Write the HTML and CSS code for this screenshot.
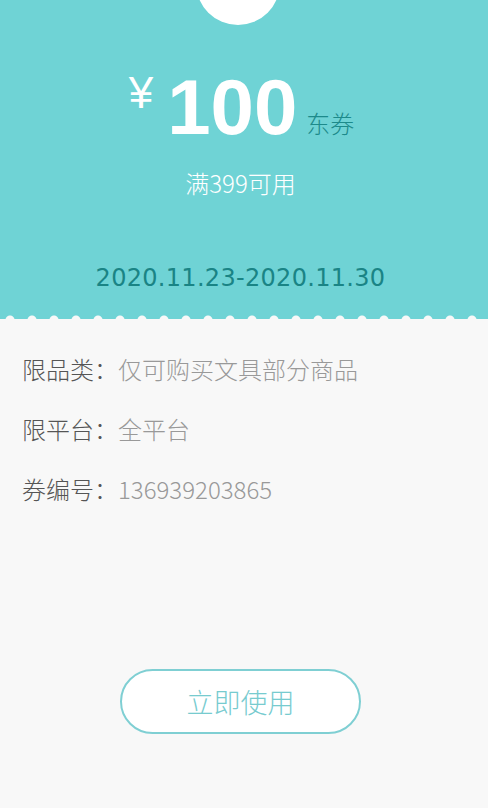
FILE: index.html
```html
<!DOCTYPE html>
<html>
<head>
	<meta charset="UTF-8">
	<title>优惠券详情</title>
	<meta name="viewport" content="width=488, initial-scale=1">
	<link rel="stylesheet" href="styles.css">
</head>
<body>
	<div class="coupon">
	<div class="coupon-top">
		<div class="amount">
		<span class="yen">¥</span>
		<span class="value">100</span>
		<span class="unit">东券</span>
		</div>
		<div class="limit">满399可用</div>
		<div class="date">2020.11.23-2020.11.30</div>
	</div>
	<div class="edge"></div>
	<div class="coupon-info">
		<div class="row"><span class="label">限品类：</span><span class="text">仅可购买文具部分商品</span></div>
		<div class="row"><span class="label">限平台：</span><span class="text">全平台</span></div>
		<div class="row"><span class="label">券编号：</span><span class="text">136939203865</span></div>
	</div>
	<div class="action">
		<button class="use-btn">立即使用</button>
	</div>
	</div>
</body>
</html>
```
FILE: styles.css
```css
    body{
	margin:0;
	padding:0;
	background:#f8f8f8;
	font-family: "Noto Sans CJK SC", "Noto Sans", sans-serif;
    }
    .coupon{
	width:488px;
	height:808px;
	display:flex;
	flex-direction:column;
	overflow:hidden;
    }
    .coupon-top{
	position:relative;
	height:314px;
	background:#6fd3d5;
	display:flex;
	flex-direction:column;
	align-items:center;
	padding:68px 7px 0 0;
	box-sizing:border-box;
    }
    /* half hole at the top */
    .coupon-top::before{
	content:"";
	position:absolute;
	top:-59px;
	left:196px;
	width:84px;
	height:84px;
	border-radius:50%;
	background:#fff;
    }
    .edge{
	height:5px;
	background-color:#6fd3d5;
	background-image:radial-gradient(circle at 11px 6px, #f8f8f8 4px, rgba(248,248,248,0) 5px);
	background-size:22px 5px;
	background-position:-1px 0;
	background-repeat:repeat-x;
    }
    .amount{
	display:flex;
	align-items:flex-start;
	height:78px;
	margin-left:2px;
    }
    .yen{
	font-family:"Liberation Sans", sans-serif;
	font-size:44px;
	line-height:44px;
	color:#fff;
	margin-top:3px;
	margin-right:14px;
    }
    .value{
	font-family:"Liberation Sans", sans-serif;
	font-weight:bold;
	font-size:78px;
	line-height:78px;
	color:#fff;
    }
    .unit{
	align-self:flex-end;
	font-size:24px;
	font-weight:300;
	line-height:24px;
	color:#1d8a8b;
	margin-left:9px;
	margin-bottom:11px;
    }
    .limit{
	margin-top:22px;
	font-size:24px;
	font-weight:300;
	line-height:30px;
	color:#fff;
    }
    .date{
	margin-top:65px;
	font-family:"DejaVu Sans", "Verdana", sans-serif;
	font-size:24px;
	letter-spacing:0.3px;
	line-height:30px;
	color:#1a8485;
    }
    .coupon-info{
	padding:33px 0 0 22px;
	display:flex;
	flex-direction:column;
	gap:26px;
    }
    .row{
	font-size:24px;
	font-weight:300;
	line-height:34px;
	display:flex;
    }
    .label{
	color:#555;
    }
    .text{
	color:#999;
    }
    .action{
	display:flex;
	justify-content:center;
	margin-top:163px;
	padding-right:7px;
    }
    .use-btn{
	width:241px;
	height:65px;
	border:2px solid #7fcfd3;
	border-radius:33px;
	background:#fff;
	color:#77cbcf;
	font-family:"Noto Sans CJK SC", sans-serif;
	font-size:27px;
	font-weight:300;
	padding:0;
    }
```
